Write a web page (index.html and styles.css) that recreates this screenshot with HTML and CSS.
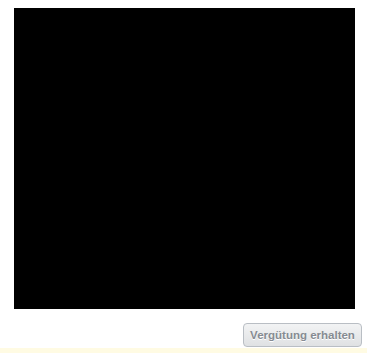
FILE: index.html
```html
<!DOCTYPE html>
<html>
<head>
<meta charset="utf-8">
<link rel="stylesheet" href="styles.css">
</head>
<body>
<div class="page">
  <div class="video"></div>
  <div class="actions">
    <button class="btn">Vergütung erhalten</button>
  </div>
  <div class="notice"></div>
</div>
</body>
</html>
```
FILE: styles.css
```css
html, body {
  margin: 0;
  padding: 0;
  background: #ffffff;
  font-family: "Liberation Sans", Arial, sans-serif;
}
.page {
  display: flex;
  flex-direction: column;
  padding-top: 8px;
}
.video {
  margin-left: 14px;
  width: 341px;
  height: 301px;
  background: #000000;
}
.actions {
  display: flex;
  justify-content: flex-end;
  padding-right: 7px;
  margin-top: 14px;
}
.btn {
  box-sizing: border-box;
  width: 119px;
  height: 24px;
  padding: 0;
  border: 1px solid #b9bec4;
  border-radius: 4px;
  background: linear-gradient(#f2f3f4, #dfe1e3);
  color: #868b92;
  font-family: "Liberation Sans", Arial, sans-serif;
  font-weight: bold;
  font-size: 11.5px;
  text-shadow: 0 1px 0 #ffffff;
}
.notice {
  margin-top: 1px;
  width: 367px;
  height: 12px;
  background: #fffbe3;
}
```
